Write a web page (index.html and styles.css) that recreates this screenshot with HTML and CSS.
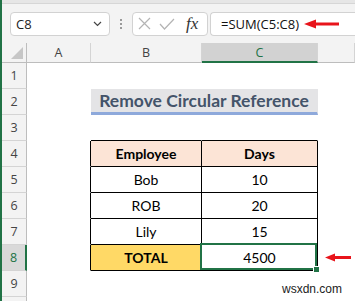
FILE: index.html
```html
<!DOCTYPE html>
<html lang="en">
<head>
    <meta charset="UTF-8">
    <title>Remove Circular Reference</title>
    <link rel="stylesheet" href="styles.css">
</head>
<body>
    <div class="window">
        <div class="topband"></div>
        <div class="formula-bar">
            <div class="name-box">
                <span>C8</span>
                <svg class="chevron" width="9" height="6" viewBox="0 0 9 6"><path d="M1 1 L4.5 4.5 L8 1" fill="none" stroke="#444" stroke-width="1.2"/></svg>
            </div>
            <div class="grip"><i></i><i></i><i></i></div>
            <div class="fx-box">
                <svg width="13" height="13" viewBox="0 0 13 13"><path d="M1 1 L12 12 M12 1 L1 12" stroke="#b4b4b4" stroke-width="1.2"/></svg>
                <svg width="16" height="12" viewBox="0 0 16 12"><path d="M1 6 L5.5 11 L15 1" fill="none" stroke="#b4b4b4" stroke-width="1.2"/></svg>
                <span class="fx">fx</span>
            </div>
            <div class="formula-input">
                <span>=SUM(C5:C8)</span>
                <svg class="arrow" width="36" height="10" viewBox="0 0 36 10"><path d="M9 5 H35" stroke="#e8141b" stroke-width="3"/><path d="M0 5 L12 0.5 L12 9.5 Z" fill="#e8141b"/></svg>
            </div>
        </div>

        <div class="sheet">
            <div class="hdr corner"><span class="tri"></span></div>
            <div class="hdr col">A</div>
            <div class="hdr col">B</div>
            <div class="hdr col active">C</div>
            <div class="hdr col"></div>

            <div class="hdr row">1</div>
            <div class="cell"></div><div class="cell"></div><div class="cell"></div><div class="cell"></div>

            <div class="hdr row">2</div>
            <div class="cell"></div>
            <div class="cell title">Remove Circular Reference</div>
            <div class="cell"></div>

            <div class="hdr row">3</div>
            <div class="cell"></div><div class="cell above"></div><div class="cell above"></div><div class="cell"></div>

            <div class="hdr row">4</div>
            <div class="cell before"></div><div class="cell tb head">Employee</div><div class="cell tb head">Days</div><div class="cell"></div>

            <div class="hdr row">5</div>
            <div class="cell before"></div><div class="cell tb">Bob</div><div class="cell tb">10</div><div class="cell"></div>

            <div class="hdr row">6</div>
            <div class="cell before"></div><div class="cell tb">ROB</div><div class="cell tb">20</div><div class="cell"></div>

            <div class="hdr row">7</div>
            <div class="cell before"></div><div class="cell tb">Lily</div><div class="cell tb">15</div><div class="cell"></div>

            <div class="hdr row active">8</div>
            <div class="cell before"></div><div class="cell tb total">TOTAL</div><div class="cell tb sel">4500<span class="handle"></span></div>
            <div class="cell note">
                <svg width="26" height="9" viewBox="0 0 26 9"><path d="M8 4.5 H26" stroke="#e8141b" stroke-width="3"/><path d="M0 4.5 L10 0.5 L10 8.5 Z" fill="#e8141b"/></svg>
            </div>

            <div class="hdr row">9</div>
            <div class="cell"></div><div class="cell"></div><div class="cell"></div><div class="cell"></div>

            <div class="hdr row"></div>
            <div class="cell"></div><div class="cell"></div><div class="cell"></div><div class="cell"></div>
        </div>

        <div class="watermark">wsxdn.com</div>
    </div>
</body>
</html>
```

FILE: styles.css
```css
body {
    margin: 0;
    background: #fff;
    font-family: Lato, "Open Sans", sans-serif;
    overflow: hidden;
}
.window {
    position: relative;
    width: 355px;
    height: 301px;
    border-left: 2px solid #217346;
    box-sizing: border-box;
    overflow: hidden;
}
.topband {
    height: 3px;
    background: #e6e6e6;
    border-bottom: 1px solid #d6d6d6;
}
.formula-bar {
    height: 39px;
    background: #f3f3f3;
    display: flex;
    align-items: center;
    padding-left: 8px;
    font-family: "Open Sans", sans-serif;
}
.name-box {
    width: 100px;
    height: 24px;
    box-sizing: border-box;
    background: #fff;
    border: 1px solid #d2d2d2;
    border-radius: 4px;
    display: flex;
    align-items: center;
    justify-content: space-between;
    padding: 0 7px 0 5px;
    font-size: 13px;
    color: #222;
}
.grip {
    width: 22px;
    display: flex;
    flex-direction: column;
    align-items: center;
    gap: 2px;
}
.grip i {
    width: 2px;
    height: 2px;
    background: #9a9a9a;
}
.fx-box {
    width: 76px;
    height: 24px;
    box-sizing: border-box;
    background: #fff;
    border: 1px solid #d2d2d2;
    border-radius: 4px;
    display: flex;
    align-items: center;
    padding-left: 5px;
    gap: 8px;
}
.fx {
    font-family: "Liberation Serif", serif;
    font-style: italic;
    font-size: 17px;
    color: #333;
    margin-left: 3px;
}
.formula-input {
    flex: 1;
    height: 24px;
    margin-left: 2px;
    box-sizing: border-box;
    background: #fff;
    border: 1px solid #d2d2d2;
    border-right: none;
    border-radius: 4px 0 0 4px;
    display: flex;
    align-items: center;
    padding-left: 10px;
    font-size: 13px;
    color: #111;
}
.arrow {
    margin-left: 5px;
}

.sheet {
    display: grid;
    grid-template-columns: 25px 64px 111px 116px 1fr;
    grid-template-rows: 20px;
    grid-auto-rows: 26px;
}
.cell, .hdr {
    box-sizing: border-box;
    border-right: 1px solid transparent;
    border-bottom: 1px solid transparent;
    display: flex;
    align-items: center;
    justify-content: center;
}
.hdr {
    background: #f3f3f3;
    font-family: "Open Sans", sans-serif;
    font-size: 12.5px;
    color: #444;
}
.hdr.col {
    border-right-color: #d4d4d4;
    border-bottom-color: #bdbdbd;
}
.hdr.row {
    border-right-color: #bdbdbd;
    border-bottom-color: #d4d4d4;
}
.hdr.col.active {
    background: #d2d2d2;
    color: #217346;
    border-bottom: 2px solid #217346;
}
.hdr.row.active {
    background: #d9d9d9;
    color: #217346;
    border-right: 2px solid #217346;
}
.corner {
    position: relative;
    border-right-color: #bdbdbd;
    border-bottom-color: #bdbdbd;
}
.tri {
    position: absolute;
    right: 3px;
    bottom: 3px;
    border-left: 12px solid transparent;
    border-bottom: 12px solid #c6c6c6;
}

.cell {
    font-size: 14px;
    color: #000;
}
.title {
    grid-column: span 2;
    background: #e4e4e6;
    border-bottom: 3px solid #8ea9db;
    color: #44546a;
    font-weight: 700;
    font-size: 17.5px;
}
.above {
    border-bottom-color: #000;
}
.before {
    border-right-color: #000;
}
.tb {
    border-right-color: #000;
    border-bottom-color: #000;
}
.head {
    background: #fce4d6;
    font-weight: 700;
}
.total {
    background: #ffd966;
    font-weight: 700;
}
.sel {
    position: relative;
}
.sel::before {
    content: "";
    position: absolute;
    top: -2px;
    left: -2px;
    right: 0;
    bottom: 0;
    border: 2px solid #217346;
}
.handle {
    position: absolute;
    right: -3px;
    bottom: -3px;
    width: 5px;
    height: 5px;
    background: #217346;
    border: 1px solid #fff;
}
.note {
    justify-content: flex-start;
    padding-left: 7px;
}
.watermark {
    position: absolute;
    left: 280px;
    top: 282px;
    font-family: "Liberation Sans", sans-serif;
    font-size: 12px;
    color: #222;
}
```
